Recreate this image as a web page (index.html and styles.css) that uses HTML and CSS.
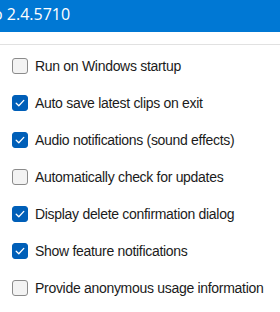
FILE: index.html
```html
<!DOCTYPE html>
<html>
	<head>
		<title>Settings</title>
		<meta charset="utf-8"/>
		<link rel="stylesheet" href="styles.css">
	</head>
	<body>
		<div class="titlebar">
			<span class="title">o 2.4.5710</span>
		</div>
		<div class="divider"></div>
		<ul class="options">
			<li class="option">
				<span class="box"></span>
				<span class="label">Run on Windows startup</span>
			</li>
			<li class="option">
				<span class="box checked">
					<svg viewBox="0 0 16 16" width="16" height="16"><path d="M4.2 8.3 L6.8 10.8 L11.8 5.4"/></svg>
				</span>
				<span class="label">Auto save latest clips on exit</span>
			</li>
			<li class="option">
				<span class="box checked">
					<svg viewBox="0 0 16 16" width="16" height="16"><path d="M4.2 8.3 L6.8 10.8 L11.8 5.4"/></svg>
				</span>
				<span class="label">Audio notifications (sound effects)</span>
			</li>
			<li class="option">
				<span class="box"></span>
				<span class="label">Automatically check for updates</span>
			</li>
			<li class="option">
				<span class="box checked">
					<svg viewBox="0 0 16 16" width="16" height="16"><path d="M4.2 8.3 L6.8 10.8 L11.8 5.4"/></svg>
				</span>
				<span class="label">Display delete confirmation dialog</span>
			</li>
			<li class="option">
				<span class="box checked">
					<svg viewBox="0 0 16 16" width="16" height="16"><path d="M4.2 8.3 L6.8 10.8 L11.8 5.4"/></svg>
				</span>
				<span class="label">Show feature notifications</span>
			</li>
			<li class="option">
				<span class="box"></span>
				<span class="label">Provide anonymous usage information</span>
			</li>
		</ul>
	</body>
</html>
```

FILE: styles.css
```css
body {
	font-family: 'Liberation Sans', Arial, sans-serif;
	color: #1b1b1b;
	background: #fff;
	margin: 0;
	padding: 0;
	overflow: hidden;
}

.titlebar {
	background-color: #0078d4;
	height: 32px;
	overflow: hidden;
	white-space: nowrap;
}

.title {
	display: block;
	color: #fff;
	font-family: 'Open Sans', 'Liberation Sans', sans-serif;
	font-size: 16px;
	line-height: 28px;
	margin-left: -7px;
}

.divider {
	height: 1px;
	background: #e1e1e1;
	margin-top: 12px;
}

.options {
	list-style: none;
	margin: 0;
	padding: 13px 0 0 12px;
	display: flex;
	flex-direction: column;
	gap: 21px;
}

.option {
	display: flex;
	align-items: center;
	gap: 7px;
	height: 16px;
	font-size: 14px;
	letter-spacing: -0.3px;
}

.box {
	width: 14px;
	height: 14px;
	border: 1px solid #8b8b8b;
	border-radius: 3px;
	background: #f3f3f3;
	flex: none;
	position: relative;
}

.box.checked {
	background: #005fb8;
	border-color: #005fb8;
}

.box svg {
	position: absolute;
	left: -1px;
	top: -1px;
	fill: none;
	stroke: #fff;
	stroke-width: 1.3;
	stroke-linecap: round;
	stroke-linejoin: round;
}

.label {
	line-height: 16px;
	white-space: nowrap;
}
```
